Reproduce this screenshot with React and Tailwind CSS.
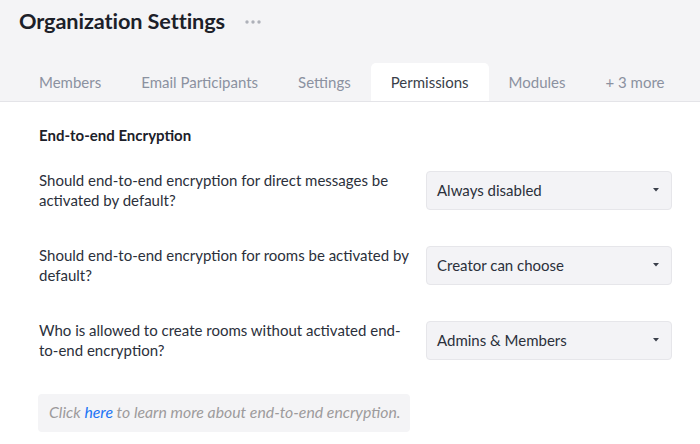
import { useState } from "react";

const tabs = ["Members", "Email Participants", "Settings", "Permissions", "Modules", "+ 3 more"];

const rows = [
  {
    q: "Should end-to-end encryption for direct messages be activated by default?",
    v: "Always disabled",
  },
  {
    q: "Should end-to-end encryption for rooms be activated by default?",
    v: "Creator can choose",
  },
  {
    q: "Who is allowed to create rooms without activated end-to-end encryption?",
    v: "Admins & Members",
  },
];

function Select({ value }) {
  return (
    <button className="w-[246px] h-[39px] flex items-center justify-between pl-[10px] pr-[12px] bg-[#f3f3f6] border border-[#e6e6ea] rounded-[4px] text-[15px] text-[#2b303b]">
      <span>{value}</span>
      <svg width="6" height="4" viewBox="0 0 6 4">
        <path d="M0 0h6L3 3.5z" fill="#3a3f4a" />
      </svg>
    </button>
  );
}

export default function App() {
  const [active, setActive] = useState("Permissions");

  return (
    <div className="w-[700px] h-[444px] bg-white overflow-hidden" style={{ fontFamily: "Lato, 'Liberation Sans', sans-serif" }}>
      <div className="bg-[#f4f4f6] border-b border-[#e4e4e8]">
        <div className="flex items-center pl-[19px] pt-[3px] h-[40px]">
          <h1 className="text-[21.7px] font-bold text-[#1c2029] tracking-[-0.1px]">Organization Settings</h1>
          {/* more menu */}
          <svg className="ml-[20px] mt-[1px]" width="16" height="4" viewBox="0 0 16 4">
            <circle cx="2" cy="2" r="1.7" fill="#aeb1b9" />
            <circle cx="8" cy="2" r="1.7" fill="#aeb1b9" />
            <circle cx="14" cy="2" r="1.7" fill="#aeb1b9" />
          </svg>
        </div>
        <div className="flex mt-[23px] pl-[19px] h-[38px]">
          {tabs.map((t) => (
            <button
              key={t}
              onClick={() => setActive(t)}
              className={
                t === active
                  ? "px-[20px] h-full bg-white rounded-t-[5px] text-[15px] text-[#3a3f4a] -mb-px"
                  : "px-[20px] h-full text-[15px] text-[#8b91a0]"
              }
            >
              {t}
            </button>
          ))}
        </div>
      </div>

      <div className="px-[39px]">
        <h2 className="pt-[23px] text-[15px] font-bold text-[#1c2029] leading-[20px]">End-to-end Encryption</h2>

        <div className="mt-[25px] flex flex-col gap-[35px]">
          {rows.map((r) => (
            <div key={r.v} className="flex items-center justify-between -mr-[11px]">
              <p className="w-[375px] text-[15px] leading-[20px] text-[#2b303b]">{r.q}</p>
              <Select value={r.v} />
            </div>
          ))}
        </div>

        <div className="mt-[34px] -ml-px w-[372px] h-[38px] leading-[36px] whitespace-nowrap px-[11px] bg-[#f4f4f6] rounded-[4px] text-[15.8px] italic text-[#9d9b9c]">
          Click <a href="#" className="text-[#1d74f5]">here</a> to learn more about end-to-end encryption.
        </div>
      </div>
    </div>
  );
}
